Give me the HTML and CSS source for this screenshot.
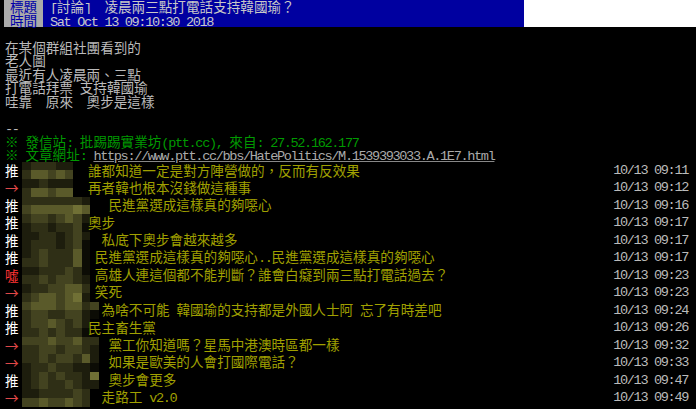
FILE: index.html
```html
<!DOCTYPE html>
<html lang="zh-Hant">
<head>
<meta charset="utf-8">
<title>凌晨兩三點打電話支持韓國瑜？</title>
<link rel="stylesheet" href="styles.css">
</head>
<body>
<div class="page">
  <div class="meta-wrap">
    <div class="meta">
      <div class="metaline"><span class="tag">標題</span><span class="value"><span class="l">[</span>討論<span class="l">]  </span>凌晨兩三點打電話支持韓國瑜？</span></div>
      <div class="metaline"><span class="tag">時間</span><span class="value"><span class="l">Sat Oct 13 09:10:30 2018</span></span></div>
    </div>
    <div class="meta-rest"></div>
  </div>

  <div class="main">
    <div class="line">在某個群組社團看到的</div>
    <div class="line">老人圖</div>
    <div class="line">最近有人凌晨兩、三點</div>
    <div class="line">打電話拜票<span class="l"> </span>支持韓國瑜</div>
    <div class="line">哇靠<span class="l">  </span>原來<span class="l">  </span>奧步是這樣</div>
    <div class="line"></div>
    <div class="line"><span class="l">--</span></div>
    <div class="line green">※<span class="l"> </span>發信站<span class="l">: </span>批踢踢實業坊<span class="l">(ptt.cc), </span>來自<span class="l">: 27.52.162.177</span></div>
    <div class="line"><span class="green">※<span class="l"> </span>文章網址<span class="l">: </span></span><a class="link l" href="#">https://www.ptt.cc/bbs/HatePolitics/M.1539393033.A.1E7.html</a></div>

    <div class="push"><span class="ptag up">推</span><span class="user"><span class="mosaic"><i class="b"></i><i class="c"></i><i class="c"></i><i class="e"></i><i class="c"></i><i class="e"></i><i class="c"></i><i class="d"></i><i class="b"></i><i class="e"></i><i class="b"></i><i class="d"></i></span></span><span class="pc">誰都知道一定是對方陣營做的，反而有反效果</span><span class="time l">10/13 09:11</span></div>

    <div class="push"><span class="ptag arrow">→</span><span class="user"><span class="mosaic"><i class="b"></i><i class="c"></i><i class="b"></i><i class="e"></i><i class="c"></i><i class="e"></i><i class="b"></i><i class="d"></i><i class="b"></i><i class="e"></i><i class="b"></i><i class="e"></i></span></span><span class="pc">再者韓也根本沒錢做這種事</span><span class="time l">10/13 09:12</span></div>

    <div class="push"><span class="ptag up">推</span><span class="user"><span class="mosaic"><i class="c"></i><i class="d"></i><i class="c"></i><i class="e"></i><i class="c"></i><i class="e"></i><i class="c"></i><i class="e"></i><i class="c"></i><i class="e"></i><i class="c"></i><i class="e"></i><i class="c"></i><i class="f"></i><i class="b"></i><i class="e"></i></span></span><span class="pc"><span class="l">   </span>民進黨選成這樣真的夠噁心</span><span class="time l">10/13 09:16</span></div>

    <div class="push"><span class="ptag up">推</span><span class="user"><span class="mosaic"><i class="c"></i><i class="b"></i><i class="d"></i><i class="c"></i><i class="d"></i><i class="c"></i><i class="c"></i><i class="b"></i><i class="d"></i><i class="c"></i><i class="e"></i><i class="c"></i><i class="d"></i><i class="d"></i><i class="b"></i><i class="a"></i></span></span><span class="pc">奧步</span><span class="time l">10/13 09:17</span></div>

    <div class="push"><span class="ptag up">推</span><span class="user"><span class="mosaic"><i class="b"></i><i class="b"></i><i class="b"></i><i class="c"></i><i class="c"></i><i class="c"></i><i class="c"></i><i class="c"></i><i class="b"></i><i class="b"></i><i class="c"></i><i class="c"></i><i class="d"></i><i class="d"></i><i class="b"></i><i class="a"></i></span></span><span class="pc"><span class="l">  </span>私底下奧步會越來越多</span><span class="time l">10/13 09:17</span></div>

    <div class="push"><span class="ptag up">推</span><span class="user"><span class="mosaic"><i class="b"></i><i class="c"></i><i class="c"></i><i class="c"></i><i class="d"></i><i class="d"></i><i class="c"></i><i class="c"></i><i class="c"></i><i class="c"></i><i class="c"></i><i class="c"></i><i class="e"></i><i class="e"></i><i class="a"></i><i class="a"></i></span></span><span class="pc"><span class="l"> </span>民進黨選成這樣真的夠噁心<span class="l">..</span>民進黨選成這樣真的夠噁心</span><span class="time l">10/13 09:17</span></div>

    <div class="push"><span class="ptag boo">噓</span><span class="user"><span class="mosaic"><i class="b"></i><i class="c"></i><i class="b"></i><i class="c"></i><i class="c"></i><i class="d"></i><i class="c"></i><i class="c"></i><i class="c"></i><i class="d"></i><i class="d"></i><i class="d"></i><i class="c"></i><i class="c"></i><i class="a"></i><i class="b"></i></span></span><span class="pc"><span class="l"> </span>高雄人連這個都不能判斷？誰會白癡到兩三點打電話過去？</span><span class="time l">10/13 09:23</span></div>

    <div class="push"><span class="ptag arrow">→</span><span class="user"><span class="mosaic"><i class="b"></i><i class="c"></i><i class="c"></i><i class="d"></i><i class="c"></i><i class="e"></i><i class="d"></i><i class="e"></i><i class="d"></i><i class="d"></i><i class="e"></i><i class="e"></i><i class="e"></i><i class="f"></i><i class="c"></i><i class="b"></i></span></span><span class="pc"><span class="l"> </span>笑死</span><span class="time l">10/13 09:23</span></div>

    <div class="push"><span class="ptag up">推</span><span class="user"><span class="mosaic"><i class="d"></i><i class="c"></i><i class="e"></i><i class="d"></i><i class="e"></i><i class="d"></i><i class="e"></i><i class="c"></i><i class="d"></i><i class="c"></i><i class="e"></i><i class="d"></i><i class="e"></i><i class="d"></i><i class="c"></i><i class="b"></i><i class="d"></i><i class="a"></i></span></span><span class="pc"><span class="l">  </span>為啥不可能<span class="l"> </span>韓國瑜的支持都是外國人士阿<span class="l"> </span>忘了有時差吧</span><span class="time l">10/13 09:24</span></div>

    <div class="push"><span class="ptag up">推</span><span class="user"><span class="mosaic"><i class="c"></i><i class="c"></i><i class="d"></i><i class="c"></i><i class="d"></i><i class="d"></i><i class="e"></i><i class="c"></i><i class="d"></i><i class="d"></i><i class="c"></i><i class="c"></i><i class="d"></i><i class="c"></i><i class="b"></i><i class="a"></i></span></span><span class="pc">民主畜生黨</span><span class="time l">10/13 09:26</span></div>

    <div class="push"><span class="ptag arrow">→</span><span class="user"><span class="mosaic"><i class="d"></i><i class="c"></i><i class="d"></i><i class="c"></i><i class="d"></i><i class="d"></i><i class="e"></i><i class="d"></i><i class="d"></i><i class="c"></i><i class="d"></i><i class="d"></i><i class="e"></i><i class="d"></i><i class="c"></i><i class="c"></i><i class="c"></i><i class="b"></i></span></span><span class="pc"><span class="l">   </span>黨工你知道嗎？星馬中港澳時區都一樣</span><span class="time l">10/13 09:32</span></div>

    <div class="push"><span class="ptag arrow">→</span><span class="user"><span class="mosaic"><i class="c"></i><i class="b"></i><i class="c"></i><i class="c"></i><i class="d"></i><i class="c"></i><i class="c"></i><i class="d"></i><i class="d"></i><i class="c"></i><i class="d"></i><i class="c"></i><i class="c"></i><i class="b"></i><i class="e"></i><i class="b"></i><i class="b"></i><i class="a"></i></span></span><span class="pc"><span class="l">   </span>如果是歐美的人會打國際電話？</span><span class="time l">10/13 09:33</span></div>

    <div class="push"><span class="ptag up">推</span><span class="user"><span class="mosaic"><i class="b"></i><i class="b"></i><i class="c"></i><i class="c"></i><i class="d"></i><i class="d"></i><i class="c"></i><i class="c"></i><i class="d"></i><i class="c"></i><i class="c"></i><i class="d"></i><i class="c"></i><i class="c"></i><i class="b"></i><i class="b"></i><i class="f"></i><i class="b"></i></span></span><span class="pc"><span class="l">   </span>奧步會更多</span><span class="time l">10/13 09:47</span></div>

    <div class="push"><span class="ptag arrow">→</span><span class="user"><span class="mosaic"><i class="b"></i><i class="d"></i><i class="b"></i><i class="d"></i><i class="c"></i><i class="e"></i><i class="c"></i><i class="d"></i><i class="c"></i><i class="d"></i><i class="c"></i><i class="e"></i><i class="d"></i><i class="d"></i><i class="c"></i><i class="c"></i></span></span><span class="pc"><span class="l">  </span>走路工<span class="l"> v2.0</span></span><span class="time l">10/13 09:49</span></div>
  </div>
</div>
</body>
</html>
```

FILE: styles.css
```css
html, body {
  margin: 0;
  padding: 0;
  background: #000;
}

body {
  width: 696px;
  height: 409px;
  overflow: hidden;
  font-family: "Noto Sans CJK TC", sans-serif;
  font-size: 13.6px;
  color: #bbbbbb;
}

.page {
  display: flex;
  flex-direction: column;
}

.l {
  font-family: "Liberation Mono", "Noto Sans CJK TC", monospace;
  letter-spacing: -1.36px;
  white-space: pre;
}

/* header */
.meta-wrap {
  display: flex;
  height: 27px;
}

.meta {
  width: 520px;
  padding-left: 4px;
  display: flex;
  flex-direction: column;
}

.meta-rest {
  flex: 1;
  background: #ffffff;
}

.metaline {
  display: flex;
  height: 13.5px;
  line-height: 13.5px;
}

.tag {
  width: 39px;
  box-sizing: border-box;
  padding-left: 6px;
  background: #aaaaaa;
  color: #0000a8;
  flex-shrink: 0;
}

.value {
  flex: 1;
  padding-left: 7px;
  background: #0000a0;
  color: #c8c8c8;
  white-space: pre;
}

/* body */
.main {
  padding: 14px 8px 0 5px;
  display: flex;
  flex-direction: column;
}

.line {
  height: 13.4px;
  line-height: 13.4px;
  white-space: pre;
}

.green {
  color: #009900;
}

.link {
  color: #aaaaaa;
  text-decoration: underline;
  text-decoration-color: #888888;
  text-underline-offset: 1px;
}

/* pushes */
.push {
  display: flex;
  align-items: center;
  height: 17.5px;
  line-height: 17.5px;
  white-space: pre;
}

.ptag {
  width: 17px;
  flex-shrink: 0;
}

.up { color: #ffffff; }
.arrow { color: #e04848; }
.boo { color: #ff3333; }

.user {
  width: 66px;
  flex-shrink: 0;
  height: 17.5px;
  display: flex;
}

.mosaic {
  display: inline-grid;
  grid-template-rows: repeat(2, 8.75px);
  grid-auto-flow: column;
  grid-auto-columns: 8.5px;
  height: 17.5px;
}

.mosaic i { display: block; }
.mosaic .a { background: #0c0c05; }
.mosaic .b { background: #1d1d0d; }
.mosaic .c { background: #2f2f16; }
.mosaic .d { background: #434320; }
.mosaic .e { background: #5a5a2a; }
.mosaic .f { background: #707035; }

.pc {
  color: #a0a000;
  flex-shrink: 0;
}

.time {
  margin-left: auto;
  color: #bbbbbb;
}
```
